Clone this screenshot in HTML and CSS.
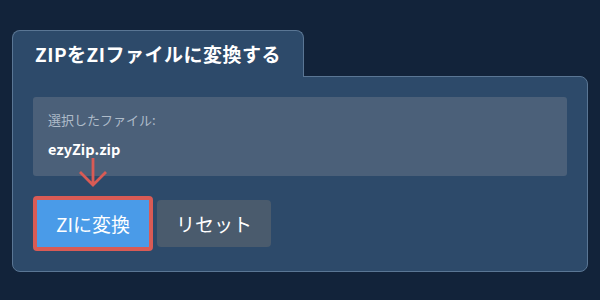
FILE: index.html
```html
<!DOCTYPE html>
<html lang="ja">
	<head>
		<meta charset="UTF-8" />
		<meta name="viewport" content="width=device-width, initial-scale=1.0" />
		<title>ZIPをZIファイルに変換する</title>
		<link rel="stylesheet" href="styles.css">
	</head>
	<body>
		<div class="converter">
			<div class="tab">ZIPをZIファイルに変換する</div>
			<div class="panel">
				<div class="file-box">
					<div class="file-label">選択したファイル:</div>
					<div class="file-name">ezyZip.zip</div>
				</div>
				<div class="actions">
					<div class="convert-wrap">
						<svg class="arrow" width="30" height="30" viewBox="0 0 30 30">
							<path d="M15 1 V28 M2 15 L15 28 L28 15" fill="none" stroke="#d95b55" stroke-width="2.8" />
						</svg>
						<button class="btn btn-convert">ZIに変換</button>
					</div>
					<button class="btn btn-reset">リセット</button>
				</div>
			</div>
		</div>
	</body>
</html>
```

FILE: styles.css
```css
html,
body {
	height: 100%;
}

body {
	margin: 0;
	padding: 30px 12px 0 12px;
	box-sizing: border-box;
	background: #12233a;
	font-family: "Noto Sans CJK JP", "Noto Sans", sans-serif;
	color: white;
}

.converter {
	width: 576px;
}

.tab {
	display: inline-block;
	position: relative;
	z-index: 1;
	margin-bottom: -1px;
	padding: 11px 22px 12px 22px;
	background: #2d4a6a;
	border: 1px solid #5a7694;
	border-bottom: none;
	border-radius: 8px 8px 0 0;
	font-size: 19px;
	font-weight: bold;
	letter-spacing: 0.5px;
	line-height: 23px;
}

.panel {
	padding: 20px 20px 20px 20px;
	background: #2d4a6a;
	border: 1px solid #5a7694;
	border-radius: 0 8px 8px 8px;
}

.file-box {
	padding: 14px 15px 16px 15px;
	background: #4b6079;
	border-radius: 3px;
	margin-bottom: 20px;
}

.file-label {
	font-size: 13px;
	line-height: 18px;
	color: #aebbc9;
	margin-bottom: 9px;
}

.file-name {
	font-size: 14.5px;
	font-weight: bold;
	line-height: 22px;
}

.actions {
	display: flex;
	align-items: center;
	gap: 4px;
}

.convert-wrap {
	position: relative;
}

.arrow {
	position: absolute;
	left: 45px;
	bottom: 100%;
	margin-bottom: 9px;
}

.btn {
	box-sizing: border-box;
	height: 47px;
	padding: 0;
	border: none;
	border-radius: 4px;
	color: white;
	font-family: "Noto Sans CJK JP", "Noto Sans", sans-serif;
	font-size: 19px;
	cursor: pointer;
}

.btn-convert {
	display: block;
	width: 120px;
	height: 55px;
	background: #4a9be8;
	border: 4px solid #d95b55;
	border-radius: 4px;
}

.btn-reset {
	width: 114px;
	background: #4a5b6d;
}
```
